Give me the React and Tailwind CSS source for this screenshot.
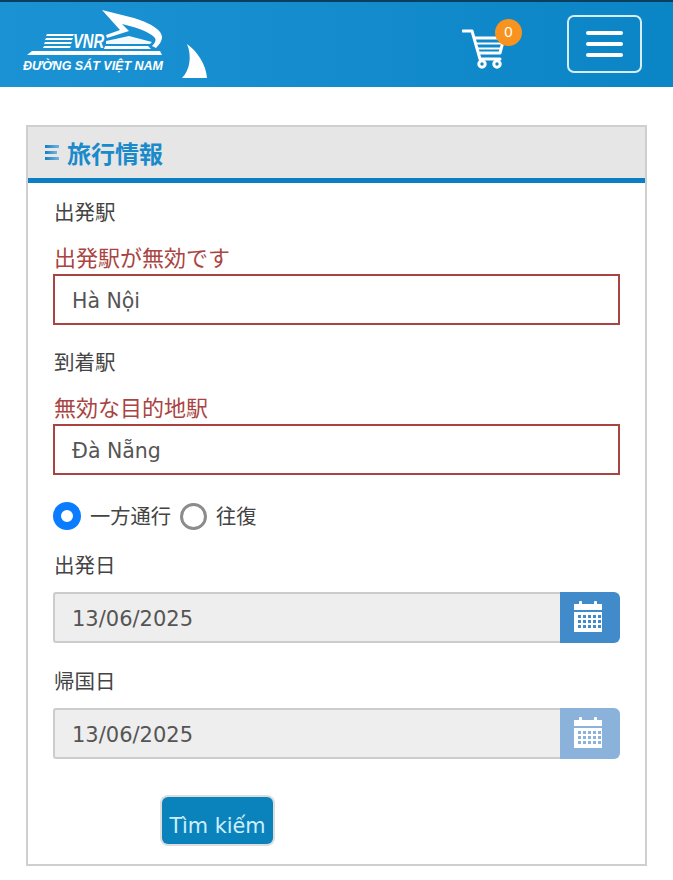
const CJK = "font-['Noto_Sans_CJK_JP','Noto_Sans',sans-serif]";

function Logo() {
  return (
    <div className="relative w-[210px] h-[87px]">
      <svg width="210" height="87" viewBox="0 0 210 87" className="absolute left-0 top-0">
        <g fill="#fff">
          <path d="M102 10 L134 18 C150 23 162 30 162 37 C162 41 159 45 156 48 L152 46 C156 42 157 39 153 36 C147 31 135 27 122 24 L129 31 L107 38 L106 35 L120 30 Z" />
          <path d="M106 41 L129 36 L152 42 L150 44 L106 44 Z" opacity="0.95" />
          <path d="M105 46 H148 L151 49 H104 Z" />
          <path d="M47 34 H74 L73 36 H46 Z M46 38 H73 L72 40 H45 Z M45 42 H72 L71 44 H44 Z M44 46 H71 L70 48 H43 Z" />
          <path d="M32 51 H160 L162 55 H27 Z" />
          <path d="M187 44 C197 51 206 64 207 78 H182 C190 70 192 56 187 44 Z" />
        </g>
      </svg>
      <span className="absolute left-[73px] top-[31px] origin-left scale-x-[0.74] font-['Liberation_Sans',sans-serif] text-[20px] leading-[20px] font-bold italic text-white">
        VNR
      </span>
      <span className="absolute left-[23px] top-[59px] font-['Liberation_Sans',sans-serif] text-[12.500px] leading-[14px] font-bold italic text-white whitespace-nowrap">
        ĐƯỜNG SÁT VIỆT NAM
      </span>
    </div>
  );
}

function Cart() {
  return (
    <svg width="46" height="40" viewBox="0 0 46 40" fill="none" stroke="#fff" strokeWidth="3">
      <path d="M1 2 H10 L18 30 H38" strokeLinecap="round" strokeLinejoin="round" />
      <path d="M12 9 H42 L38 24 H16" strokeLinejoin="round" />
      <path d="M14 14.5 H41 M15.500 19.500 H39.500" strokeWidth="2.200" />
      <circle cx="20" cy="35" r="3.200" />
      <circle cx="35" cy="35" r="3.200" />
    </svg>
  );
}

function Calendar() {
  return (
    <svg width="30" height="34" viewBox="0 0 30 34" fill="#fff">
      <rect x="6" y="0" width="3" height="6" rx="1" />
      <rect x="21" y="0" width="3" height="6" rx="1" />
      <rect x="1" y="3" width="28" height="6" />
      <path
        fillRule="evenodd"
        d="M1 11 H29 V31 H1 Z M5 14 v3 h3 v-3 Z M10 14 v3 h3 v-3 Z M15 14 v3 h3 v-3 Z M20 14 v3 h3 v-3 Z M25 14 v3 h3 v-3 Z M5 19 v3 h3 v-3 Z M10 19 v3 h3 v-3 Z M15 19 v3 h3 v-3 Z M20 19 v3 h3 v-3 Z M25 19 v3 h3 v-3 Z M5 24 v3 h3 v-3 Z M10 24 v3 h3 v-3 Z M15 24 v3 h3 v-3 Z M20 24 v3 h3 v-3 Z M25 24 v3 h3 v-3 Z"
      />
    </svg>
  );
}

function StationField({ label, error, value }) {
  return (
    <div>
      <p className="pl-px text-[20.500px] leading-[28px] text-[#444]">{label}</p>
      <p className="pl-px mt-[17px] text-[22px] leading-[28px] text-[#a94442]">{error}</p>
      <div className="mt-[4px] h-[51px] border-2 border-[#a94442] pl-[17px] pt-[4px] flex items-center font-['DejaVu_Sans',sans-serif] text-[20.500px] text-[#555]">
        {value}
      </div>
    </div>
  );
}

function DateField({ label, value, faded }) {
  return (
    <div>
      <p className="pl-px text-[20.500px] leading-[28px] text-[#444]">{label}</p>
      <div className="mt-[14px] flex h-[51px]">
        <div className="flex-1 bg-[#eeeeee] border-2 border-r-0 border-[#cccccc] rounded-l-[3px] pl-[17px] pt-[4px] flex items-center font-['DejaVu_Sans',sans-serif] text-[21px] text-[#555]">
          {value}
        </div>
        <div
          className={
            faded
              ? "w-[60px] pr-[4px] bg-[#8ab2da] rounded-r-[6px] flex items-center justify-center"
              : "w-[60px] pr-[4px] bg-[#428bca] rounded-r-[6px] flex items-center justify-center"
          }
        >
          <Calendar />
        </div>
      </div>
    </div>
  );
}

export default function App() {
  return (
    <div className={`${CJK} min-h-[880px] bg-white`}>
      <header className="h-[87px] border-t-2 border-[#0b3f5f] bg-gradient-to-r from-[#1b92d3] to-[#0a85c6] flex items-start">
        <div className="-mt-[2px]">
          <Logo />
        </div>
        <div className="relative ml-[252px] mt-[27px]">
          <Cart />
          <span className="absolute left-[33px] -top-[10px] w-[27px] h-[27px] rounded-full bg-[#f7931e] flex items-center justify-center font-['Liberation_Sans',sans-serif] text-[15px] text-white">
            0
          </span>
        </div>
        <button className="ml-[59px] mt-[13px] w-[75px] h-[58px] border-2 border-[#d7eefa] rounded-[7px] flex flex-col items-center justify-center gap-[7px]">
          <span className="block w-[37px] h-[4px] rounded-full bg-white" />
          <span className="block w-[37px] h-[4px] rounded-full bg-white" />
          <span className="block w-[37px] h-[4px] rounded-full bg-white" />
        </button>
      </header>

      <section className="mx-[26px] mt-[38px] h-[741px] border-2 border-[#cfcfcf]">
        <div className="h-[56px] bg-[#e6e6e6] border-b-[5px] border-[#0b7fc1] flex items-center pl-[17px] gap-[8px]">
          <div className="flex flex-col gap-[3px]">
            <span className="block w-[14px] h-[3px] bg-gradient-to-r from-[#0b7fc1] to-[#6db6e0]" />
            <span className="block w-[12px] h-[3px] bg-gradient-to-r from-[#0b7fc1] to-[#6db6e0]" />
            <span className="block w-[14px] h-[3px] bg-gradient-to-r from-[#0b7fc1] to-[#6db6e0]" />
          </div>
          <h2 className="text-[24px] font-bold text-[#1a8acb]">旅行情報</h2>
        </div>

        <div className="px-[25px] pt-[14px]">
          <StationField label="出発駅" error="出発駅が無効です" value="Hà Nội" />
          <div className="mt-[22px]">
            <StationField label="到着駅" error="無効な目的地駅" value="Đà Nẵng" />
          </div>

          <div className="mt-[27px] flex items-center h-[28px] text-[20.250px] text-[#444]">
            <span className="w-[28px] h-[28px] rounded-full border-[8px] border-[#0a7cff] bg-white" />
            <span className="ml-[9px]">一方通行</span>
            <span className="ml-[9px] w-[27px] h-[27px] rounded-full border-[3px] border-[#8c8c8c] bg-white" />
            <span className="ml-[9px]">往復</span>
          </div>

          <div className="mt-[20px]">
            <DateField label="出発日" value="13/06/2025" />
          </div>
          <div className="mt-[23px]">
            <DateField label="帰国日" value="13/06/2025" faded />
          </div>

          <button className="block ml-[109px] mt-[38px] w-[111px] h-[47px] pt-[10px] bg-[#0a83bd] rounded-[6px] ring-2 ring-[#dddddd] font-['DejaVu_Sans',sans-serif] text-[20.800px] leading-[28px] text-[#cdeefb]">
            Tìm kiếm
          </button>
        </div>
      </section>
    </div>
  );
}
